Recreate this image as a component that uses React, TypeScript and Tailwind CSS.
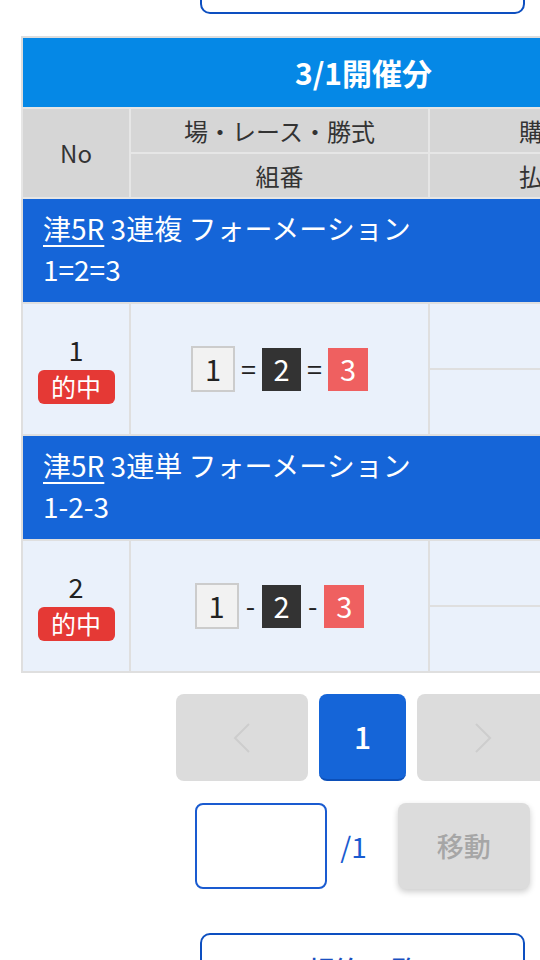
import React from "react";

type Bet = {
  no: number;
  place: string;
  kind: string;
  combo: string;
  sep: "=" | "-";
  boxes: [string, string, string];
};

const BETS: Bet[] = [
  { no: 1, place: "津5R", kind: "3連複 フォーメーション", combo: "1=2=3", sep: "=", boxes: ["1", "2", "3"] },
  { no: 2, place: "津5R", kind: "3連単 フォーメーション", combo: "1-2-3", sep: "-", boxes: ["1", "2", "3"] },
];

function Combo({ bet }: { bet: Bet }) {
  const sep = (
    <span className={bet.sep === "=" ? "mx-[6px] text-[27px] text-[#222]" : "mx-[7px] text-[27px] text-[#222]"}>
      {bet.sep}
    </span>
  );
  return (
    <div className="flex items-center justify-center">
      <span className="flex h-[46px] w-[44px] items-center justify-center border-2 border-[#cccccc] bg-[#f2f2f2] text-[29px] text-[#222]">
        {bet.boxes[0]}
      </span>
      {sep}
      <span className="flex h-[43px] w-[39px] items-center justify-center bg-[#333333] text-[29px] text-white">
        {bet.boxes[1]}
      </span>
      {sep}
      <span className="flex h-[43px] w-[40px] items-center justify-center bg-[#ef6060] text-[29px] text-white">
        {bet.boxes[2]}
      </span>
    </div>
  );
}

function Chevron({ dir }: { dir: "left" | "right" }) {
  return (
    <svg width="18" height="32" viewBox="0 0 18 32" fill="none" stroke="#cdcdcd" strokeWidth="2">
      {dir === "left" ? <polyline points="16,2 2,16 16,30" /> : <polyline points="2,2 16,16 2,30" />}
    </svg>
  );
}

export default function App() {
  return (
    <div className="w-[540px] h-[960px] overflow-hidden bg-white font-['Noto_Sans_CJK_JP','Noto_Sans',sans-serif]">
      <div className="w-[725px] px-[21px]">
        {/* top button (scrolled off) */}
        <div className="flex justify-center">
          <button className="-mt-[46px] h-[60px] w-[325px] rounded-[10px] border-2 border-[#0d4fc0] bg-white" />
        </div>

        <table className="mt-[22px] w-[683px] table-fixed border-collapse border-2 border-[#dddddd]">
          <colgroup>
            <col className="w-[108px]" />
            <col className="w-[299px]" />
            <col className="w-[276px]" />
          </colgroup>
          <thead>
            <tr>
              <th colSpan={3} className="h-[71px] bg-[#0588e6] text-center text-[30px] font-bold text-white">
                3/1開催分
              </th>
            </tr>
            <tr className="h-[45px] bg-[#d6d6d6] text-[24px] text-[#333]">
              <th rowSpan={2} className="border-2 border-[#e6e6e6] text-center font-normal">
                No
              </th>
              <th className="border-2 border-[#e6e6e6] text-center font-normal">場・レース・勝式</th>
              <th className="border-2 border-[#e6e6e6] text-center font-normal">購入金額</th>
            </tr>
            <tr className="h-[45px] bg-[#d6d6d6] text-[24px] text-[#333]">
              <th className="border-2 border-[#e6e6e6] text-center font-normal">組番</th>
              <th className="border-2 border-[#e6e6e6] text-center font-normal">払戻金額</th>
            </tr>
          </thead>
          <tbody>
            {BETS.map((bet) => (
              <React.Fragment key={bet.no}>
                <tr>
                  <td colSpan={3} className="h-[105px] bg-[#1565d8] pl-[20px] text-left align-middle text-[28px] leading-[41px] text-white">
                    <div className="-mt-[3px]">
                      <span className="underline underline-offset-[5px] decoration-[2px]">{bet.place}</span> {bet.kind}
                    </div>
                    <div>{bet.combo}</div>
                  </td>
                </tr>
                <tr className="h-[66px] bg-[#eaf1fb]">
                  <td rowSpan={2} className="border-2 border-[#dfdfdf] text-center align-middle">
                    <div className="flex flex-col items-center">
                      <span className="text-[27px] leading-[32px] text-[#222]">{bet.no}</span>
                      <span className="mt-[4px] flex h-[34px] w-[77px] items-center justify-center rounded-[6px] bg-[#e53935] text-[25px] text-white">
                        的中
                      </span>
                    </div>
                  </td>
                  <td rowSpan={2} className="border-2 border-[#dfdfdf] align-middle">
                    <Combo bet={bet} />
                  </td>
                  <td className="border-2 border-[#dfdfdf]" />
                </tr>
                <tr className="h-[66px] bg-[#eaf1fb]">
                  <td className="border-2 border-[#dfdfdf]" />
                </tr>
              </React.Fragment>
            ))}
          </tbody>
        </table>

        {/* pagination */}
        <div className="mt-[21px] flex justify-center gap-[11px]">
          <button className="flex h-[87px] w-[132px] items-center justify-center rounded-[8px] bg-[#dcdcdc]">
            <Chevron dir="left" />
          </button>
          <button className="flex h-[87px] w-[87px] items-center justify-center rounded-[8px] border-b-2 border-[#0c4fb8] bg-[#1565d8] text-[30px] font-medium text-white">
            1
          </button>
          <button className="flex h-[87px] w-[132px] items-center justify-center rounded-[8px] bg-[#dcdcdc]">
            <Chevron dir="right" />
          </button>
        </div>

        <div className="mt-[22px] flex items-center justify-center">
          <div className="h-[86px] w-[132px] rounded-[8px] border-2 border-[#1a5bd0] bg-white" />
          <span className="ml-[13px] text-[28px] text-[#1a5bd0]">/1</span>
          <button className="ml-[31px] flex h-[86px] w-[132px] items-center justify-center rounded-[8px] bg-[#dcdcdc] text-[27px] font-medium text-[#a6a6a6] shadow-[0_3px_6px_rgba(0,0,0,0.2)]">
            移動
          </button>
        </div>

        <div className="mt-[44px] flex justify-center">
          <button className="flex h-[64px] w-[325px] items-start justify-center rounded-[10px] border-2 border-[#0d4fc0] bg-white pt-[15px] text-[28px] leading-[40px] font-medium text-[#1a4fc0]">
            契約一覧
          </button>
        </div>
      </div>
    </div>
  );
}
